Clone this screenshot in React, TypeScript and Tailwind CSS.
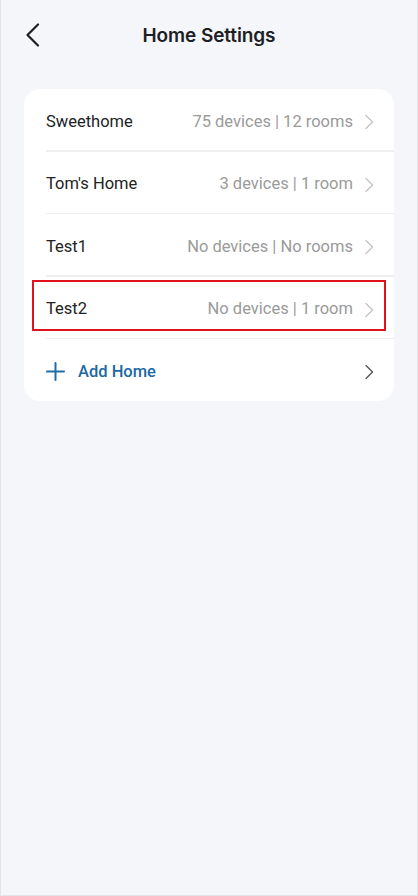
import React from "react";

const rows = [
  { name: "Sweethome", info: "75 devices | 12 rooms" },
  { name: "Tom's Home", info: "3 devices | 1 room" },
  { name: "Test1", info: "No devices | No rooms" },
  { name: "Test2", info: "No devices | 1 room", highlight: true },
];

function Chevron({ color }: { color: string }) {
  return (
    <svg width="10" height="16" viewBox="0 0 10 16" fill="none">
      <path d="M2 1.5L8.5 8L2 14.5" stroke={color} strokeWidth="1.4" strokeLinecap="round" strokeLinejoin="round" />
    </svg>
  );
}

export default function App() {
  return (
    <div
      className="w-[418px] h-[896px] bg-[#f5f6fa] border-l border-r border-b border-[#e3e4e8] flex flex-col"
      style={{ fontFamily: "Roboto, 'Noto Sans', sans-serif" }}
    >
      <div className="relative h-[70px] flex items-center justify-center">
        <div className="absolute left-[24px] top-[23px]">
          <svg width="16" height="24" viewBox="0 0 16 24" fill="none">
            <path d="M13 1.5L2.5 12L13 22.5" stroke="#1f1f1f" strokeWidth="2.2" strokeLinecap="round" strokeLinejoin="round" />
          </svg>
        </div>
        <span
          className="mt-[2px] text-[19px] font-semibold text-[#1e2124] tracking-[-0.1px]"
          style={{ fontFamily: "Inter, sans-serif" }}
        >
          Home Settings
        </span>
      </div>
      <div className="mx-[23px] mt-[19px] bg-white rounded-[16px] flex flex-col">
        {rows.map((r) => (
          <div key={r.name} className="relative">
            <div className="h-[61px] flex items-center pl-[22px] pr-[20px] pt-[5px]">
              <span className="text-[16.5px] text-[#222]">{r.name}</span>
              <span className="ml-auto text-[16.5px] text-[#9a9a9a]">{r.info}</span>
              <span className="ml-[11px] flex items-center">
                <Chevron color="#c4c4c4" />
              </span>
            </div>
            <div className="ml-[22px] h-[1.5px] bg-[#efefef]" />
            {r.highlight && (
              <div className="absolute left-[8px] right-[8px] top-[3px] h-[51px] border-2 border-[#e0131c]" />
            )}
          </div>
        ))}
        <div className="h-[62px] flex items-center pl-[22px] pr-[20px] pt-[3px]">
          <svg width="19" height="19" viewBox="0 0 19 19" fill="none">
            <path d="M9.5 1V18M1 9.5H18" stroke="#1f6ca8" strokeWidth="2" strokeLinecap="round" />
          </svg>
          <span className="ml-[13px] text-[16.5px] font-medium text-[#1c68a3] pt-[1px]">Add Home</span>
          <span className="ml-auto flex items-center">
            <Chevron color="#555" />
          </span>
        </div>
      </div>
    </div>
  );
}
